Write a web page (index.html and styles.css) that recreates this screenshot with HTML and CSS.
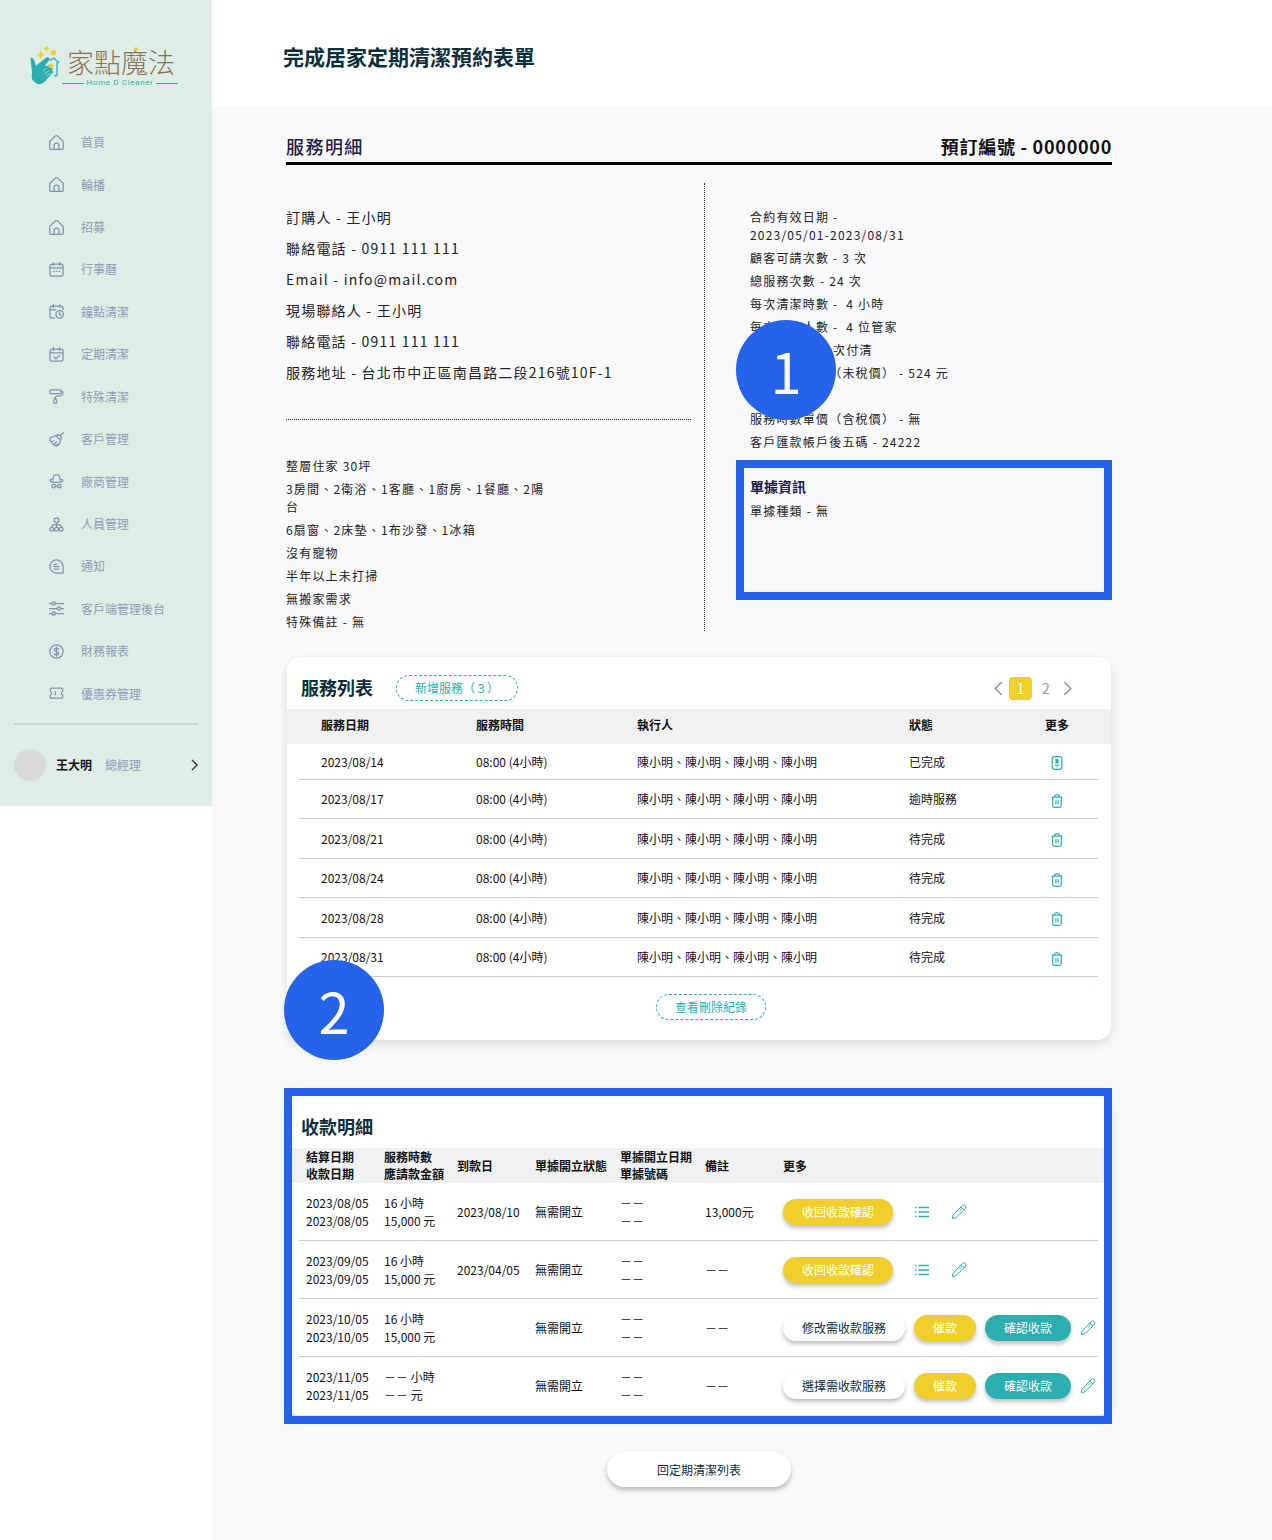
FILE: index.html
```html
<!DOCTYPE html>
<html lang="zh-Hant">
<head>
<meta charset="utf-8">
<meta name="viewport" content="width=device-width, initial-scale=1">
<title>完成居家定期清潔預約表單</title>
<link rel="stylesheet" href="styles.css">
</head>
<body>
<svg class="sprite" aria-hidden="true">
  <symbol id="i-home" viewBox="0 0 24 24"><path d="M1.200 10.500 9.500 2.200a3.500 3.500 0 0 1 5 0l8.300 8.300V21a1.800 1.800 0 0 1-1.800 1.800H3A1.800 1.800 0 0 1 1.200 21ZM8 22.500V17a4 4 0 0 1 8 0v5.500"/></symbol>
  <symbol id="i-calendar" viewBox="0 0 24 24"><path d="M5 3.500h14a3.500 3.500 0 0 1 3.500 3.500v12a3.500 3.500 0 0 1-3.500 3.500H5A3.500 3.500 0 0 1 1.500 19V7A3.500 3.500 0 0 1 5 3.500ZM1.500 9.500h21M7 1v4.500M17 1v4.500M7 15h.8M11.600 15h.8M16.200 15h.8"/></symbol>
  <symbol id="i-calendar-time" viewBox="0 0 24 24"><path d="M9 22.500H5A3.500 3.500 0 0 1 1.500 19V7A3.500 3.500 0 0 1 5 3.500h14A3.500 3.500 0 0 1 22.500 7v2M1.500 9.500H11M7 1v4.500M17 1v4.500M17 13.500V17l2.500 1"/><circle cx="17" cy="16.500" r="6"/></symbol>
  <symbol id="i-calendar-check" viewBox="0 0 24 24"><path d="M5 3.500h14a3.500 3.500 0 0 1 3.500 3.500v12a3.500 3.500 0 0 1-3.500 3.500H5A3.500 3.500 0 0 1 1.500 19V7A3.500 3.500 0 0 1 5 3.500ZM1.500 9.500h21M7 1v4.500M17 1v4.500M8 16l3 3 6-5.500"/></symbol>
  <symbol id="i-roller" viewBox="0 0 24 24"><rect x="1.500" y="1.500" width="18" height="6" rx="2"/><path d="M19.500 3.500c2 0 3 1 3 3s-1 3.500-3 4l-7 1c-1.500.3-2.500 1-2.500 3M10 14.500c-2 2-2.500 3.500-2.500 5.500s1 3 2.500 3 2.500-1 2.500-3-.5-3.500-2.500-5.500Z"/></symbol>
  <symbol id="i-broom" viewBox="0 0 24 24"><path d="m23 1-5 5M11 5.500l7.500 7.500c1.500-2 2-4.500.3-6.500-2-2.500-5-2.500-7.800-1ZM11 5.500C7.500 8.500 4 8 1.500 9.500c0 6 5 11.500 10.500 13 4-1 5.500-5.500 6.500-9.500M4 16l4-2M7.500 20l4.500-4M10 22l4-2"/></symbol>
  <symbol id="i-agent" viewBox="0 0 24 24"><path d="m6 10 1.500-7a1.800 1.800 0 0 1 1.700-1.500h5.600A1.800 1.800 0 0 1 16.500 3l1.500 7M4 8.500c-5 2-2 5 8 5s13-3 8-5M10 19.500h4"/><circle cx="7.500" cy="19.500" r="2.800"/><circle cx="16.500" cy="19.500" r="2.800"/></symbol>
  <symbol id="i-team" viewBox="0 0 24 24"><circle cx="12" cy="5" r="3.800"/><circle cx="4.500" cy="19.500" r="3"/><circle cx="12" cy="19.500" r="3"/><circle cx="19.500" cy="19.500" r="3"/><path d="M12 9v7M4.500 16c0-3 1-4 4-4h7c3 0 4 1 4 4"/></symbol>
  <symbol id="i-message" viewBox="0 0 24 24"><path d="M12 1.500A10.500 10.500 0 1 0 12 22.500H22.500V12A10.500 10.500 0 0 0 12 1.500ZM8 8.500h4M8 12.300h8M8 16h8"/></symbol>
  <symbol id="i-sliders" viewBox="0 0 24 24"><path d="M0 4h5M10 4h13M0 12h13M19 12h4M0 20h5M10 20h13"/><circle cx="7.500" cy="4" r="2.600"/><circle cx="16" cy="12" r="2.600"/><circle cx="7.500" cy="20" r="2.600"/></symbol>
  <symbol id="i-dollar" viewBox="0 0 24 24"><circle cx="12" cy="12" r="10.700"/><path d="M15.500 8.500C15 7 13.800 6.500 12 6.500c-2 0-3.500 1-3.500 2.700 0 3.800 7.200 1.800 7.200 5.600 0 1.700-1.500 2.700-3.700 2.700-2 0-3.300-.8-3.700-2.300M12 4.500v15"/></symbol>
  <symbol id="i-ticket" viewBox="0 0 24 24"><path d="M3.500 3.500h17A1.500 1.500 0 0 1 22 5v3a4 4 0 0 0 0 7v3a1.500 1.500 0 0 1-1.500 1.500h-17A1.500 1.500 0 0 1 2 18v-3a4 4 0 0 0 0-7V5a1.500 1.500 0 0 1 1.500-1.500ZM10 9v5"/></symbol>
  <symbol id="i-right" viewBox="0 0 8 14"><path d="m1 1 6 6-6 6"/></symbol>
  <symbol id="i-left" viewBox="0 0 8 14"><path d="M7 1 1 7l6 6"/></symbol>
  <symbol id="i-trash" viewBox="0 0 12 14"><path d="M.6 3.100h10.800M1.700 3.100v8.400a1.800 1.800 0 0 0 1.800 1.800h5a1.800 1.800 0 0 0 1.800-1.800V3.100M3.300 3C3.500 1.500 4 .8 5 .8h2c1 0 1.500.7 1.700 2.200M4.900 6.200v4M7.100 6.200v4"/></symbol>
  <symbol id="i-badge" viewBox="0 0 12 14"><rect x="1.200" y=".7" width="9.600" height="12.600" rx="2"/><path d="M4 9.300h4M5.500 11.800h1"/><path class="solid" d="M4 7.500c0-1 .3-1.500.9-1.800a1.700 1.700 0 1 1 2.200 0c.6.300.9.800.9 1.800Z"/></symbol>
  <symbol id="i-list" viewBox="0 0 16 12"><path d="M4.500 1.500H15M4.500 6H15M4.500 10.500H15M1 1.500h1.500M1 6h1.500M1 10.500h1.500"/></symbol>
  <symbol id="i-pencil" viewBox="0 0 16 16"><path d="m1.300 14.700.7-3.400L11.200 1.600a2.100 2.100 0 0 1 3.100 2.900L4.900 13.800ZM11.400 4.200 8.200 7.500M9.700 3.100l1.700 1.100 1.600 1.700"/></symbol>
</svg>

<div class="layout">
  <aside class="sidebar">
    <a class="logo" href="#">
      <svg class="logo-mark" viewBox="92 45 90 123" aria-hidden="true">
        <path fill="#2caeb0" d="M94 84c5-3 10 3 12 11l4 12 30-24c6-4 13 0 11 6l-14 17 6 2 8-2c4 2 2 6-1 8l8-1c4 2 2 7-2 9l5 1c2 4-1 7-5 9-5 8-13 14-18 21-8 10-20 13-29 5-11-7-14-13-11-25 1-17-5-31-4-49Z"/>
        <path fill="none" stroke="#deeee6" stroke-width="2" d="m131 123 11-9M135 131l14-9M140 138l14-8"/>
        <path fill="none" stroke="#2caeb0" stroke-width="4" d="m152 91 12-7 15 15M173 97v40h-9"/>
        <path fill="#f0cf2d" d="M124 61q2 12 13 14-11 2-13 14-2-12-13-14 11-2 13-14ZM142 46q1 8 9 10-8 1-9 9-1-8-9-9 8-2 9-10Z"/>
        <circle cx="162" cy="68" r="8" fill="#f0cf2d"/><circle cx="155" cy="108" r="7" fill="#f0cf2d"/>
      </svg>
      <span class="logo-text">
        <span class="logo-name">家點魔法<svg class="logo-star" viewBox="0 0 6 6" aria-hidden="true"><path fill="#f0cf2d" d="M3 0q.5 2.500 3 3-2.500.5-3 3-.5-2.500-3-3 2.500-.5 3-3Z"/></svg></span>
        <span class="logo-sub">Home D Cleaner</span>
      </span>
    </a>
    <nav class="nav">
      <a href="#"><svg class="icon"><use href="#i-home"/></svg>首頁</a>
      <a href="#"><svg class="icon"><use href="#i-home"/></svg>輪播</a>
      <a href="#"><svg class="icon"><use href="#i-home"/></svg>招募</a>
      <a href="#"><svg class="icon"><use href="#i-calendar"/></svg>行事曆</a>
      <a href="#"><svg class="icon"><use href="#i-calendar-time"/></svg>鐘點清潔</a>
      <a href="#"><svg class="icon"><use href="#i-calendar-check"/></svg>定期清潔</a>
      <a href="#"><svg class="icon"><use href="#i-roller"/></svg>特殊清潔</a>
      <a href="#"><svg class="icon"><use href="#i-broom"/></svg>客戶管理</a>
      <a href="#"><svg class="icon"><use href="#i-agent"/></svg>廠商管理</a>
      <a href="#"><svg class="icon"><use href="#i-team"/></svg>人員管理</a>
      <a href="#"><svg class="icon"><use href="#i-message"/></svg>通知</a>
      <a href="#"><svg class="icon"><use href="#i-sliders"/></svg>客戶端管理後台</a>
      <a href="#"><svg class="icon"><use href="#i-dollar"/></svg>財務報表</a>
      <a href="#"><svg class="icon"><use href="#i-ticket"/></svg>優惠券管理</a>
    </nav>
    <a class="user" href="#">
      <span class="avatar"></span>
      <strong>王大明</strong>
      <span>總經理</span>
      <svg class="user-arrow" aria-hidden="true"><use href="#i-right"/></svg>
    </a>
  </aside>

  <main class="main">
    <header class="page-head"><h1>完成居家定期清潔預約表單</h1></header>
    <div class="content">
      <div class="section-head">
        <h2>服務明細</h2>
        <p>預訂編號 - 0000000</p>
      </div>

      <section class="details">
        <div class="details-left">
          <ul class="contact">
            <li>訂購人 - 王小明</li>
            <li>聯絡電話 - 0911 111 111</li>
            <li>Email - info@mail.com</li>
            <li>現場聯絡人 - 王小明</li>
            <li>聯絡電話 - 0911 111 111</li>
            <li>服務地址 - 台北市中正區南昌路二段216號10F-1</li>
          </ul>
          <ul class="facts">
            <li>整層住家 30坪</li>
            <li>3房間、2衛浴、1客廳、1廚房、1餐廳、2陽<br>台</li>
            <li>6扇窗、2床墊、1布沙發、1冰箱</li>
            <li>沒有寵物</li>
            <li>半年以上未打掃</li>
            <li>無搬家需求</li>
            <li>特殊備註 - 無</li>
          </ul>
        </div>
        <div class="details-right">
          <ul class="facts">
            <li>合約有效日期 -<br>2023/05/01-2023/08/31</li>
            <li>顧客可請次數 - 3 次</li>
            <li>總服務次數 - 24 次</li>
            <li>每次清潔時數 -&nbsp; 4 小時</li>
            <li>每次服務人數 -&nbsp; 4 位管家</li>
            <li>付款方式 -&nbsp; 一次付清</li>
            <li>服務時數單價（未稅價） - 524 元</li>
            <li>&nbsp;</li>
            <li>服務時數單價（含稅價） - 無</li>
            <li>客戶匯款帳戶後五碼 - 24222</li>
          </ul>
          <section class="receipt">
            <h3>單據資訊</h3>
            <p>單據種類 - 無</p>
            <div class="marker marker-receipt"><span class="marker-number">1</span></div>
          </section>
        </div>
      </section>

      <section class="card services">
        <div class="card-head">
          <h2>服務列表</h2>
          <button class="pill pill-dashed" type="button">新增服務（３）</button>
          <div class="pager">
            <button type="button" aria-label="上一頁"><svg><use href="#i-left"/></svg></button>
            <button type="button" class="current">1</button>
            <button type="button">2</button>
            <button type="button" aria-label="下一頁"><svg><use href="#i-right"/></svg></button>
          </div>
        </div>
        <table class="table services-table">
          <colgroup><col class="s-date"><col class="s-time"><col><col class="s-state"><col class="s-more"></colgroup>
          <thead><tr><th>服務日期</th><th>服務時間</th><th>執行人</th><th>狀態</th><th>更多</th></tr></thead>
          <tbody>
            <tr><td>2023/08/14</td><td>08:00 (4小時)</td><td>陳小明、陳小明、陳小明、陳小明</td><td>已完成</td><td><button class="icon-btn" type="button" aria-label="檢視"><svg class="glyph"><use href="#i-badge"/></svg></button></td></tr>
            <tr><td>2023/08/17</td><td>08:00 (4小時)</td><td>陳小明、陳小明、陳小明、陳小明</td><td>逾時服務</td><td><button class="icon-btn" type="button" aria-label="刪除"><svg class="glyph"><use href="#i-trash"/></svg></button></td></tr>
            <tr><td>2023/08/21</td><td>08:00 (4小時)</td><td>陳小明、陳小明、陳小明、陳小明</td><td>待完成</td><td><button class="icon-btn" type="button" aria-label="刪除"><svg class="glyph"><use href="#i-trash"/></svg></button></td></tr>
            <tr><td>2023/08/24</td><td>08:00 (4小時)</td><td>陳小明、陳小明、陳小明、陳小明</td><td>待完成</td><td><button class="icon-btn" type="button" aria-label="刪除"><svg class="glyph"><use href="#i-trash"/></svg></button></td></tr>
            <tr><td>2023/08/28</td><td>08:00 (4小時)</td><td>陳小明、陳小明、陳小明、陳小明</td><td>待完成</td><td><button class="icon-btn" type="button" aria-label="刪除"><svg class="glyph"><use href="#i-trash"/></svg></button></td></tr>
            <tr><td>2023/08/31</td><td>08:00 (4小時)</td><td>陳小明、陳小明、陳小明、陳小明</td><td>待完成</td><td><button class="icon-btn" type="button" aria-label="刪除"><svg class="glyph"><use href="#i-trash"/></svg></button></td></tr>
          </tbody>
        </table>
        <div class="card-foot"><button class="pill pill-dashed" type="button">查看刪除紀錄</button></div>
      </section>

      <section class="card payments">
        <div class="card-head"><h2>收款明細</h2></div>
        <table class="table payments-table">
          <colgroup><col class="p-date"><col class="p-amount"><col class="p-paid"><col class="p-state"><col class="p-number"><col class="p-note"><col></colgroup>
          <thead><tr><th>結算日期<br>收款日期</th><th>服務時數<br>應請款金額</th><th>到款日</th><th>單據開立狀態</th><th>單據開立日期<br>單據號碼</th><th>備註</th><th>更多</th></tr></thead>
          <tbody>
            <tr><td>2023/08/05<br>2023/08/05</td><td>16 小時<br>15,000 元</td><td>2023/08/10</td><td>無需開立</td><td>－－<br>－－</td><td>13,000元</td>
              <td><div class="actions actions-wide"><button class="pill yellow" type="button">收回收款確認</button><button class="icon-btn" type="button" aria-label="明細"><svg class="glyph-list"><use href="#i-list"/></svg></button><button class="icon-btn" type="button" aria-label="編輯"><svg class="glyph-pencil"><use href="#i-pencil"/></svg></button></div></td></tr>
            <tr><td>2023/09/05<br>2023/09/05</td><td>16 小時<br>15,000 元</td><td>2023/04/05</td><td>無需開立</td><td>－－<br>－－</td><td>－－</td>
              <td><div class="actions actions-wide"><button class="pill yellow" type="button">收回收款確認</button><button class="icon-btn" type="button" aria-label="明細"><svg class="glyph-list"><use href="#i-list"/></svg></button><button class="icon-btn" type="button" aria-label="編輯"><svg class="glyph-pencil"><use href="#i-pencil"/></svg></button></div></td></tr>
            <tr><td>2023/10/05<br>2023/10/05</td><td>16 小時<br>15,000 元</td><td></td><td>無需開立</td><td>－－<br>－－</td><td>－－</td>
              <td><div class="actions"><button class="pill white" type="button">修改需收款服務</button><button class="pill yellow" type="button">催款</button><button class="pill teal" type="button">確認收款</button><button class="icon-btn" type="button" aria-label="編輯"><svg class="glyph-pencil"><use href="#i-pencil"/></svg></button></div></td></tr>
            <tr><td>2023/11/05<br>2023/11/05</td><td>－－ 小時<br>－－ 元</td><td></td><td>無需開立</td><td>－－<br>－－</td><td>－－</td>
              <td><div class="actions"><button class="pill white" type="button">選擇需收款服務</button><button class="pill yellow" type="button">催款</button><button class="pill teal" type="button">確認收款</button><button class="icon-btn" type="button" aria-label="編輯"><svg class="glyph-pencil"><use href="#i-pencil"/></svg></button></div></td></tr>
          </tbody>
        </table>
        <div class="marker marker-payments"><span class="marker-number">2</span></div>
      </section>

      <div class="page-foot"><button class="back" type="button">回定期清潔列表</button></div>
    </div>
  </main>
</div>
</body>
</html>
```
FILE: styles.css
```css
:root {
  --teal: #2caeb0;
  --yellow: #f0cf2d;
  --navy: #0b2e3c;
  --muted: #8c9db5;
  --line: #c3ccd8;
  --marker: #2563eb;
}

* { box-sizing: border-box; }

body {
  margin: 0;
  background: #fff;
  color: #111;
  font: 12px/18px "Noto Sans CJK TC", sans-serif;
}

h1, h2, h3, p, ul { margin: 0; padding: 0; }
ul { list-style: none; }
a { color: inherit; text-decoration: none; }
button { font: inherit; color: inherit; border: 0; background: none; padding: 0; cursor: pointer; }
svg { display: block; fill: none; stroke: currentColor; }
.sprite { display: none; }
.solid { fill: currentColor; stroke: none; }

.layout { display: flex; align-items: flex-start; min-height: 100vh; }

/* Sidebar */
.sidebar { flex: 0 0 212px; padding: 45px 14px 25px; background: #deeee6; color: var(--muted); }
.logo { display: flex; gap: 7px; margin-left: 16px; height: 43px; }
.logo-mark { width: 30px; height: 41px; stroke: none; }
.logo-text { width: 124px; }
.logo-name { display: block; position: relative; color: #8b7157; font-size: 27px; font-weight: 300; line-height: 33px; white-space: nowrap; }
.logo-star { position: absolute; left: 66px; top: 1px; width: 6px; height: 6px; stroke: none; }
.logo-sub { display: flex; align-items: center; gap: 3px; width: 116px; margin-left: -5px; color: var(--teal); font: 8px/10px Roboto, sans-serif; letter-spacing: 0.08em; white-space: nowrap; }
.logo-sub::before, .logo-sub::after { content: ""; flex: 1; height: 1px; background: var(--teal); }
.nav { display: grid; grid-auto-rows: 1fr; height: 594px; margin-top: 33px; padding-left: 35px; }
.nav a { display: flex; align-items: center; gap: 17px; }
.icon { width: 15px; height: 15px; stroke-width: 2; stroke-linecap: round; stroke-linejoin: round; color: #8093ae; }
.user { display: flex; align-items: center; margin-top: 8px; padding-top: 24px; border-top: 2px solid #c6d6da; }
.avatar { width: 32px; height: 32px; margin-right: 10px; border-radius: 50%; background: #d9d9d9; }
.user strong { margin-right: 13px; color: #111; }
.user-arrow { width: 7px; height: 12px; margin-left: auto; color: #222; stroke-width: 1.5; }

/* Page */
.main { flex: 1; min-width: 0; min-height: 100vh; background: #f8f9fb; }
.page-head { height: 106px; padding: 40px 71px 0; background: #fff; }
.page-head h1 { color: var(--navy); font-size: 21px; line-height: 32px; }
.content { padding: 26px 160px 53px 74px; }

.section-head { display: flex; justify-content: space-between; padding-bottom: 2px; border-bottom: 3px solid #000; font-size: 18px; line-height: 28px; }
.section-head h2 { color: #231c45; font-size: inherit; font-weight: 500; letter-spacing: 0.08em; }
.section-head p { font-weight: 700; letter-spacing: 0.04em; }

/* Booking details */
.details { display: grid; grid-template-columns: 1fr 407px; margin-top: 18px; color: #222; letter-spacing: 0.1em; }
.details-left { padding: 24px 13px 0 0; border-right: 1px dotted #222; }
.details-right { padding: 25px 0 0 45px; }
.contact { display: grid; gap: 10px; padding-bottom: 36px; border-bottom: 1px dotted #222; font-size: 14px; line-height: 21px; }
.facts { display: grid; gap: 5px; }
.contact + .facts { margin-top: 37px; }
.receipt { position: relative; margin-top: 25px; }
.receipt h3 { margin-bottom: 5px; color: #231c45; font-size: 14px; line-height: 21px; letter-spacing: 0; }

/* Numbered callouts */
.marker { position: absolute; border: 8px solid var(--marker); pointer-events: none; }
.marker-receipt { top: -16px; right: 0; left: -14px; height: 140px; }
.marker-payments { top: -8px; right: -1px; bottom: -9px; left: -3px; }
.marker-number { position: absolute; left: -8px; width: 100px; height: 100px; border-radius: 50%; background: var(--marker); color: #fff; font-size: 56px; line-height: 100px; letter-spacing: 0; text-align: center; }
.marker-receipt .marker-number { top: -148px; }
.marker-payments .marker-number { top: -136px; }

/* Cards */
.card { position: relative; margin: 0 1px; border-radius: 14px; background: #fff; box-shadow: 0 4px 10px rgba(0, 0, 0, 0.12); }
.services { margin-top: 26px; }
.payments { margin-top: 56px; }
.card-head { display: flex; align-items: center; height: 52px; padding: 10px 39px 0 14px; }
.card-head h2 { padding-bottom: 2px; color: var(--navy); font-size: 18px; line-height: 28px; }
.card-head .pill { margin-left: 23px; }
.card-foot { display: flex; justify-content: center; padding: 17px 0 20px 24px; }

.pill { height: 26px; padding: 0 19px; border-radius: 13px; line-height: 26px; white-space: nowrap; box-shadow: 0 3px 4px rgba(0, 0, 0, 0.25); }
.pill-dashed { padding: 0 18px; border: 1px dashed var(--teal); color: var(--teal); line-height: 24px; box-shadow: 0 2px 3px rgba(0, 0, 0, 0.06); }
.yellow { background: var(--yellow); color: #fff; }
.teal { background: var(--teal); color: #fff; }
.white { background: #fff; color: var(--navy); }

.pager { display: flex; align-items: center; margin-left: auto; color: var(--muted); font-size: 14px; }
.pager button { min-width: 8px; height: 23px; line-height: 23px; }
.pager svg { width: 9px; height: 15px; stroke-width: 1.5; }
.pager .current { width: 23px; margin: 0 10px 0 6px; border-radius: 4px; background: var(--yellow); color: #fff; }
.pager button:last-child { margin-left: 13px; }

/* Tables */
.table { width: 100%; border-collapse: collapse; table-layout: fixed; }
.table th, .table td { padding: 0; text-align: left; vertical-align: middle; white-space: nowrap; }
.table thead tr { height: 35px; background: #f0f1f3; }
.table tbody tr { background: linear-gradient(var(--line), var(--line)) 12px 100% / calc(100% - 25px) 1px no-repeat; }
.table th:first-child, .table td:first-child { padding-left: 19px; }

.services-table .s-date { width: 189px; }
.services-table .s-time { width: 161px; }
.services-table .s-state { width: 111px; }
.services-table .s-more { width: 91px; }
.services-table th { padding-bottom: 3px; }
.services-table th:first-child, .services-table td:first-child { padding-left: 34px; }
.services-table th:last-child, .services-table td:last-child { padding-right: 17px; text-align: center; }
.services-table tbody tr { height: 40px; }
.services-table tbody tr:nth-child(even) { height: 39px; }
.services-table tbody tr:first-child { height: 36px; }
.services-table td { padding-bottom: 1px; }

.payments-table .p-date { width: 97px; }
.payments-table .p-amount { width: 73px; }
.payments-table .p-paid { width: 78px; }
.payments-table .p-state { width: 85px; }
.payments-table .p-number { width: 85px; }
.payments-table .p-note { width: 78px; }
.payments-table thead th { padding-bottom: 1px; line-height: 17px; }
.payments-table tbody tr { height: 58px; }
.payments-table tbody tr:last-child { background: none; }

.actions { display: flex; align-items: center; gap: 9px; }
.actions-wide { gap: 21px; }
.icon-btn { display: inline-block; vertical-align: middle; color: var(--teal); }
.glyph { width: 12px; height: 14px; stroke-width: 1.2; }
.glyph-list { width: 16px; height: 12px; stroke-width: 1.4; }
.glyph-pencil { width: 16px; height: 16px; stroke-width: 1; stroke-linejoin: round; }

.page-foot { display: flex; justify-content: center; margin-top: 37px; }
.back { height: 35px; padding: 0 50px; border-radius: 18px; background: #fff; color: var(--navy); box-shadow: 0 3px 5px rgba(0, 0, 0, 0.25); }
```
